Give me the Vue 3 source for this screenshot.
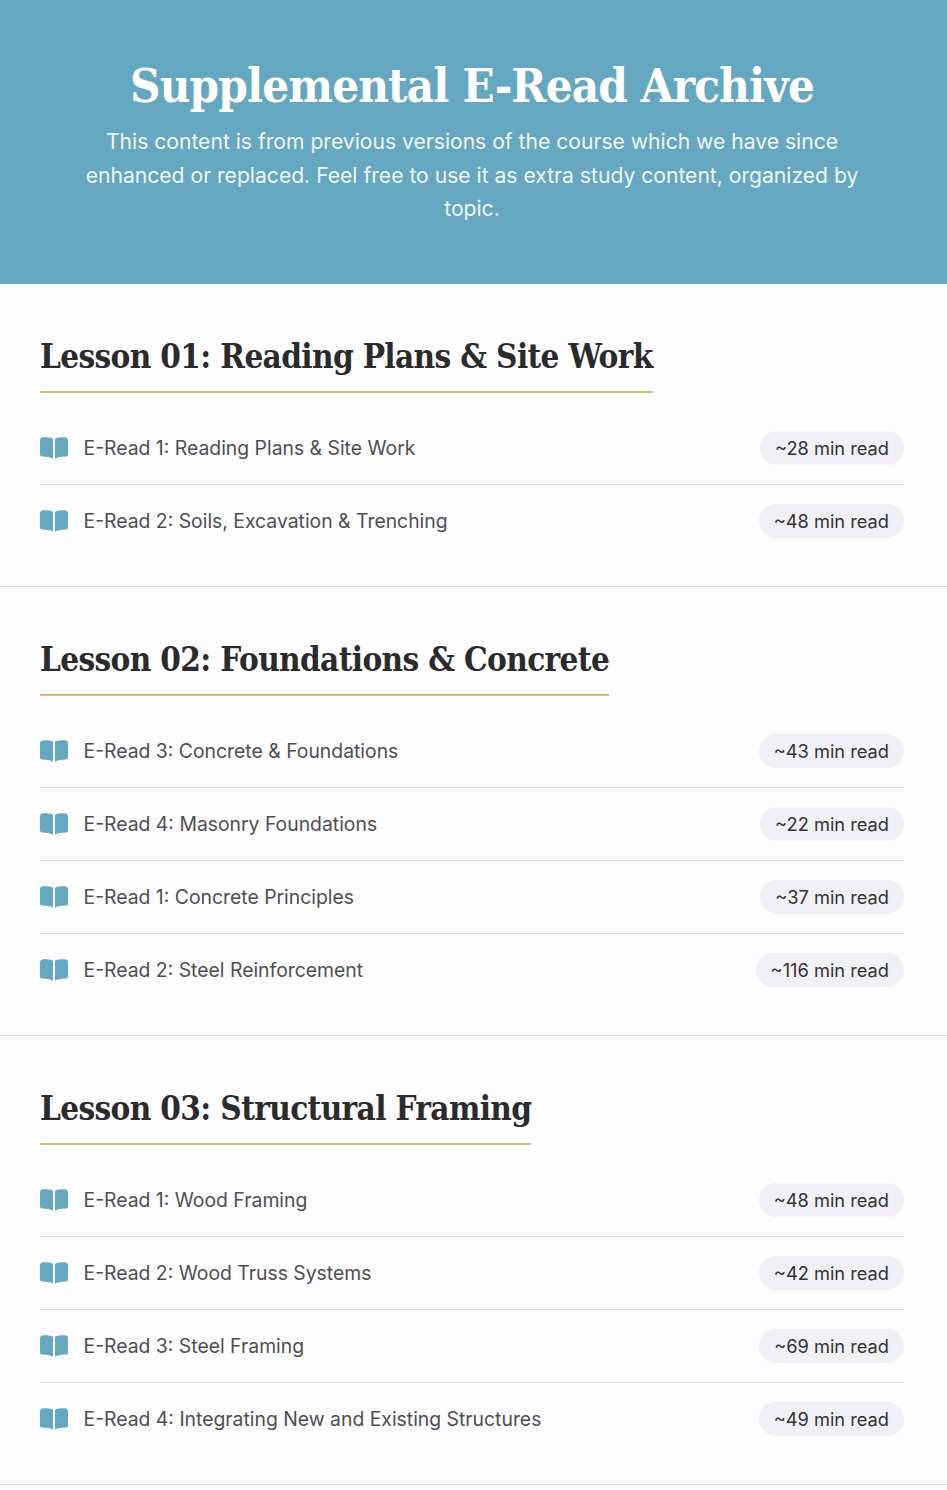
<script setup>
const lessons = [
  {
    title: "Lesson 01: Reading Plans & Site Work",
    reads: [
      { name: "E-Read 1: Reading Plans & Site Work", time: "~28 min read" },
      { name: "E-Read 2: Soils, Excavation & Trenching", time: "~48 min read" },
    ],
  },
  {
    title: "Lesson 02: Foundations & Concrete",
    reads: [
      { name: "E-Read 3: Concrete & Foundations", time: "~43 min read" },
      { name: "E-Read 4: Masonry Foundations", time: "~22 min read" },
      { name: "E-Read 1: Concrete Principles", time: "~37 min read" },
      { name: "E-Read 2: Steel Reinforcement", time: "~116 min read" },
    ],
  },
  {
    title: "Lesson 03: Structural Framing",
    reads: [
      { name: "E-Read 1: Wood Framing", time: "~48 min read" },
      { name: "E-Read 2: Wood Truss Systems", time: "~42 min read" },
      { name: "E-Read 3: Steel Framing", time: "~69 min read" },
      { name: "E-Read 4: Integrating New and Existing Structures", time: "~49 min read" },
    ],
  },
];
</script>

<template>
  <div class="page">
    <header class="hero">
      <h1>Supplemental E-Read Archive</h1>
      <p>
        This content is from previous versions of the course which we have since
        enhanced or replaced. Feel free to use it as extra study content, organized by
        topic.
      </p>
    </header>
    <section v-for="lesson in lessons" :key="lesson.title" class="lesson">
      <h2>{{ lesson.title }}</h2>
      <ul>
        <li v-for="read in lesson.reads" :key="read.name">
          <a class="read-link" href="#">
            <svg class="book" viewBox="0 0 28 22" aria-hidden="true">
              <path d="M0 3.5C0 1.5 1.5.3 3.5.3c4 0 7.5.3 9.5 1.5v20c-2.2-1.5-6-2.3-11-2.3C1 19.5 0 18.6 0 17.5z" />
              <path d="M28 3.5c0-2-1.5-3.2-3.5-3.2-4 0-7.5.3-9.5 1.5v20c2.2-1.5 6-2.3 11-2.3 1 0 2-.9 2-2z" />
            </svg>
            <span>{{ read.name }}</span>
          </a>
          <span class="time">{{ read.time }}</span>
        </li>
      </ul>
    </section>
  </div>
</template>

<style>
body {
  background: #fdfcff;
}
</style>

<style scoped>
.page {
  font-family: Inter, "Liberation Sans", sans-serif;
  line-height: 1.6;
  color: #333;
}

.hero {
  height: 284px;
  box-sizing: border-box;
  padding: 48px 35px 48px 32px;
  background: #65a7c0;
  color: #fff;
  text-align: center;
}

.hero h1 {
  margin: 0 0 1px;
  font-family: "DejaVu Serif Condensed", "DejaVu Serif", serif;
  font-size: 47px;
  font-weight: 700;
  line-height: 76px;
  letter-spacing: -0.85px;
}

.hero p {
  margin: 0 auto;
  max-width: 800px;
  font-size: 21.12px;
  line-height: 33.6px;
  opacity: 0.9;
}

.lesson {
  padding: 49px 43px 29px 40px;
  border-bottom: 1px solid #e0dfe3;
}

h2 {
  display: inline-block;
  margin: 0 0 19px;
  padding-bottom: 10px;
  border-bottom: 2px solid #dbb978;
  font-family: "DejaVu Serif Condensed", "DejaVu Serif", serif;
  font-size: 33px;
  font-weight: 700;
  line-height: 48px;
  letter-spacing: -0.65px;
  color: #2b2b2b;
}

ul {
  margin: 0;
  padding: 0;
  list-style: none;
}

li {
  display: flex;
  align-items: center;
  justify-content: space-between;
  padding: 19px 0;
  border-bottom: 1px solid #e0dfe3;
}

li:last-child {
  border-bottom: none;
}

.read-link {
  display: flex;
  align-items: center;
  gap: 15.5px;
  font-size: 19.36px;
  color: #4f4f4f;
  text-decoration: none;
}

.book {
  width: 28px;
  height: 22px;
  fill: #65a7c0;
}

.time {
  padding: 3px 15px;
  border-radius: 17px;
  background: #f0f0f5;
  font-size: 18.24px;
  line-height: 28px;
  color: #333;
}
</style>
